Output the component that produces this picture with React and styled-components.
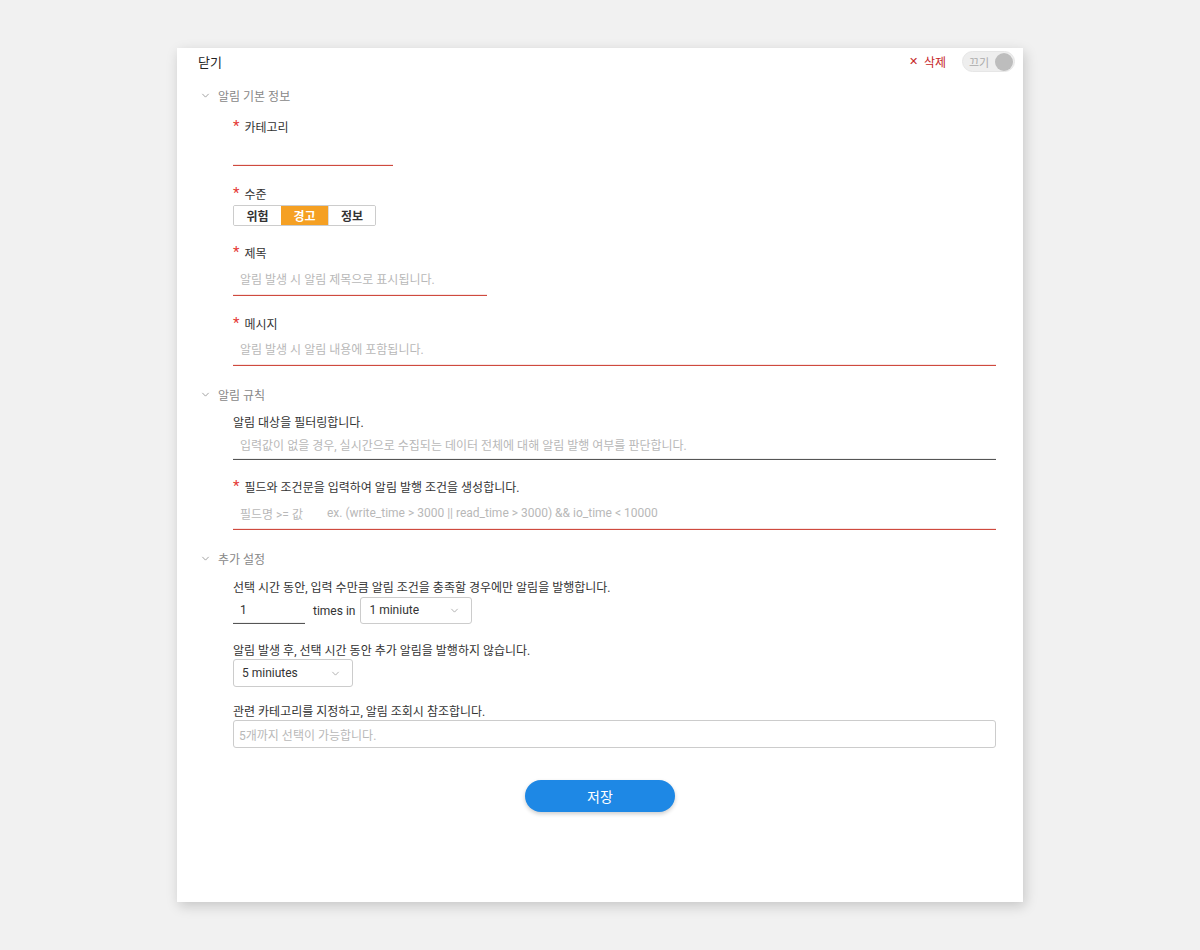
import React, { useState } from "react";
import styled, { createGlobalStyle } from "styled-components";

const GlobalStyle = createGlobalStyle`
  body {
    margin: 0;
    background: #f1f1f1;
    font-family: Roboto, "Noto Sans CJK KR", sans-serif;
    color: #333;
  }
`;

function Chevron({ size = 9, color = "#999" }) {
  return (
    <svg width={size} height={size} viewBox="0 0 10 10" fill="none">
      <path d="M1.5 3.2 L5 6.8 L8.5 3.2" stroke={color} strokeWidth="1" />
    </svg>
  );
}

function App() {
  const [level, setLevel] = useState("경고");

  return (
    <>
      <GlobalStyle />
      <Page>
        <Panel>
          <Header>
            <CloseLink>닫기</CloseLink>
            <HeaderRight>
              <DeleteLink>
                <span>✕</span>삭제
              </DeleteLink>
              <Toggle>
                <ToggleText>끄기</ToggleText>
                <Knob />
              </Toggle>
            </HeaderRight>
          </Header>

          <SectionTitle $mt={11}>
            <Chevron />
            알림 기본 정보
          </SectionTitle>
          <Body>
            <Field $mt={14}>
              <Label $required>카테고리</Label>
              <LineInput $width={160} $height={29} $tone="error" />
            </Field>
            <Field $mt={20}>
              <Label $required>수준</Label>
              <Segments>
                {["위험", "경고", "정보"].map((item) => (
                  <Segment
                    key={item}
                    $active={level === item}
                    onClick={() => setLevel(item)}
                  >
                    {item}
                  </Segment>
                ))}
              </Segments>
            </Field>
            <Field $mt={19}>
              <Label $required>제목</Label>
              <LineInput $width={254} $height={33} $tone="error">
                <Placeholder $raise={1}>알림 발생 시 알림 제목으로 표시됩니다.</Placeholder>
              </LineInput>
            </Field>
            <Field $mt={20}>
              <Label $required>메시지</Label>
              <LineInput $height={32} $tone="error">
                <Placeholder $raise={1}>알림 발생 시 알림 내용에 포함됩니다.</Placeholder>
              </LineInput>
            </Field>
          </Body>

          <SectionTitle $mt={18}>
            <Chevron />
            알림 규칙
          </SectionTitle>
          <Body>
            <Field $mt={10}>
              <Label>알림 대상을 필터링합니다.</Label>
              <LineInput $height={28} $tone="dark">
                <Placeholder $raise={1}>
                  입력값이 없을 경우, 실시간으로 수집되는 데이터 전체에 대해 알림 발행 여부를 판단합니다.
                </Placeholder>
              </LineInput>
            </Field>
            <Field $mt={19}>
              <Label $required>필드와 조건문을 입력하여 알림 발행 조건을 생성합니다.</Label>
              <LineInput $height={33} $tone="error">
                <Placeholder>필드명 &gt;= 값</Placeholder>
                <Placeholder $gap={24}>
                  ex. (write_time &gt; 3000 || read_time &gt; 3000) &amp;&amp; io_time &lt; 10000
                </Placeholder>
              </LineInput>
            </Field>
          </Body>

          <SectionTitle $mt={18}>
            <Chevron />
            추가 설정
          </SectionTitle>
          <Body>
            <Field $mt={11}>
              <Label>선택 시간 동안, 입력 수만큼 알림 조건을 충족할 경우에만 알림을 발행합니다.</Label>
              <InlineRow>
                <LineInput $width={72} $height={27} $tone="dark">
                  <Value>1</Value>
                </LineInput>
                <InlineText>times in</InlineText>
                <Select $width={112} $height={27} $mt={-1}>
                  <span>1 miniute</span>
                  <Chevron size={9} color="#aaa" />
                </Select>
              </InlineRow>
            </Field>
            <Field $mt={18}>
              <Label>알림 발생 후, 선택 시간 동안 추가 알림을 발행하지 않습니다.</Label>
              <Select $width={120} $height={28} $mt={-1}>
                <span>5 miniutes</span>
                <Chevron size={9} color="#aaa" />
              </Select>
            </Field>
            <Field $mt={16}>
              <Label>관련 카테고리를 지정하고, 알림 조회시 참조합니다.</Label>
              <BoxInput>
                <Placeholder $shift={-2}>5개까지 선택이 가능합니다.</Placeholder>
              </BoxInput>
            </Field>
          </Body>

          <Footer>
            <SaveButton>저장</SaveButton>
          </Footer>
        </Panel>
      </Page>
    </>
  );
}

const Page = styled.div`
  padding: 48px 0 48px 177px;
`;

const Panel = styled.div`
  width: 846px;
  height: 854px;
  background: #fff;
  box-shadow: 2px 4px 12px rgba(0, 0, 0, 0.18);
  display: flex;
  flex-direction: column;
  box-sizing: border-box;
`;

const Header = styled.div`
  height: 25px;
  padding: 1px 8px 0 21px;
  display: flex;
  align-items: center;
  justify-content: space-between;
`;

const CloseLink = styled.a`
  font-size: 13px;
  color: #222;
  cursor: pointer;
`;

const HeaderRight = styled.div`
  display: flex;
  align-items: center;
  gap: 16px;
`;

const DeleteLink = styled.a`
  display: flex;
  align-items: center;
  gap: 6px;
  font-size: 12px;
  color: #c62828;
  cursor: pointer;

  span {
    font-size: 11px;
  }
`;

const Toggle = styled.div`
  width: 53px;
  height: 21px;
  box-sizing: border-box;
  border-radius: 11px;
  background: #eeeeee;
  border: 1px solid #e6e6e6;
  display: flex;
  align-items: center;
  justify-content: space-between;
  padding: 0 1px 0 6px;
`;

const ToggleText = styled.span`
  font-size: 11px;
  color: #aaa;
`;

const Knob = styled.span`
  width: 18px;
  height: 18px;
  border-radius: 50%;
  background: #bdbdbd;
`;

const SectionTitle = styled.div`
  margin-top: ${(p) => p.$mt}px;
  height: 20px;
  padding-left: 24px;
  display: flex;
  align-items: center;
  gap: 8px;
  font-size: 12px;
  color: #888;
`;

const Body = styled.div`
  padding: 0 27px 0 56px;
  display: flex;
  flex-direction: column;
`;

const Field = styled.div`
  margin-top: ${(p) => p.$mt}px;
  display: flex;
  flex-direction: column;
  align-items: flex-start;
`;

const Label = styled.div`
  height: 18px;
  line-height: 18px;
  font-size: 12px;
  color: #333;
  display: flex;
  align-items: center;

  &::before {
    content: ${(p) => (p.$required ? '"*"' : "none")};
    color: #e53935;
    font-size: 15px;
    margin-right: 5px;
    position: relative;
    top: -2px;
  }
`;

const LineInput = styled.div`
  width: ${(p) => (p.$width ? `${p.$width}px` : "100%")};
  height: ${(p) => p.$height}px;
  box-sizing: border-box;
  border-bottom: 1px solid
    ${(p) => (p.$tone === "error" ? "#cf4a3e" : "#555")};
  box-shadow: inset 0 -1px 0
    ${(p) =>
      p.$tone === "error" ? "rgba(207, 74, 62, 0.14)" : "rgba(0, 0, 0, 0.06)"};
  display: flex;
  align-items: center;
  padding-left: 7px;
`;

const Placeholder = styled.span`
  font-size: 12px;
  color: #b8b8b8;
  margin-left: ${(p) => p.$gap || 0}px;
  position: relative;
  left: ${(p) => p.$shift || 0}px;
  top: ${(p) => -(p.$raise || 0)}px;
  white-space: nowrap;
`;

const Value = styled.span`
  font-size: 12px;
  color: #333;
`;

const Segments = styled.div`
  margin-top: 1px;
  display: flex;
  border: 1px solid #ccc;
  border-radius: 2px;
  overflow: hidden;
`;

const Segment = styled.button`
  width: 47px;
  height: 19px;
  border: 0;
  border-left: ${(p) => (p.$active ? "0" : "1px solid #ddd")};
  &:first-child {
    border-left: 0;
  }
  background: ${(p) => (p.$active ? "#f5a023" : "#fff")};
  color: ${(p) => (p.$active ? "#fff" : "#333")};
  font-family: inherit;
  font-size: 12px;
  font-weight: 700;
  padding: 0;
  cursor: pointer;
`;

const InlineRow = styled.div`
  display: flex;
  align-items: center;
`;

const InlineText = styled.span`
  font-size: 12px;
  color: #333;
  margin: 0 5px 0 8px;
`;

const Select = styled.div`
  width: ${(p) => p.$width}px;
  height: ${(p) => p.$height}px;
  margin-top: ${(p) => p.$mt || 0}px;
  box-sizing: border-box;
  border: 1px solid #ccc;
  border-radius: 3px;
  display: flex;
  align-items: center;
  justify-content: space-between;
  padding: 0 12px 0 8px;
  font-size: 12px;
  color: #333;
`;

const BoxInput = styled.div`
  width: 100%;
  height: 28px;
  margin-top: -1px;
  box-sizing: border-box;
  border: 1px solid #ccc;
  border-radius: 3px;
  display: flex;
  align-items: center;
  padding-left: 7px;
`;

const Footer = styled.div`
  margin-top: 32px;
  display: flex;
  justify-content: center;
`;

const SaveButton = styled.button`
  width: 150px;
  height: 32px;
  border: 0;
  border-radius: 16px;
  background: #1e88e5;
  color: #fff;
  font-family: inherit;
  font-size: 14px;
  box-shadow: 0 2px 4px rgba(0, 0, 0, 0.2);
  cursor: pointer;
`;

export default App;
